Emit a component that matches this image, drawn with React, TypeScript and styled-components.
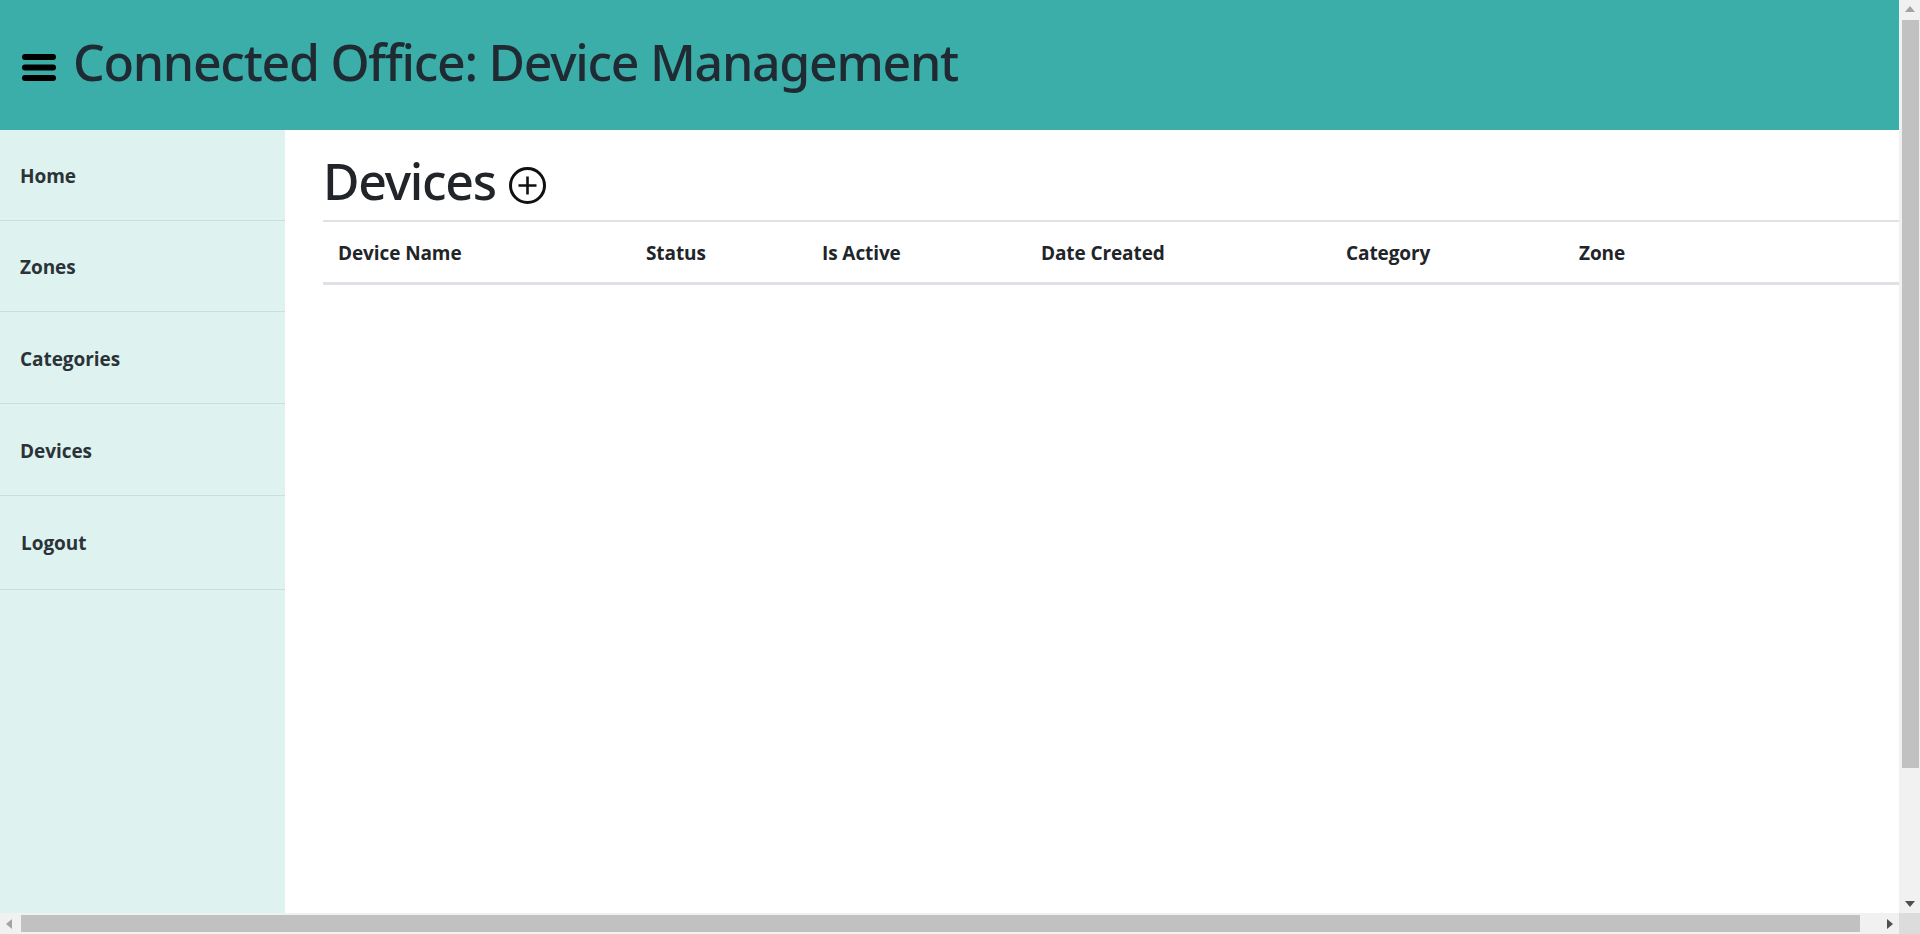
import React from "react";
import styled, { createGlobalStyle } from "styled-components";

const Global = createGlobalStyle`
  html, body { margin: 0; padding: 0; height: 100%; overflow: hidden; background: #fff; }
  * { box-sizing: border-box; }
`;

const Frame = styled.div`
  display: grid;
  grid-template-columns: 1899px 21px;
  grid-template-rows: 913px 21px;
  width: 1920px;
  height: 934px;
  font-family: "Open Sans", "Noto Sans", sans-serif;
  color: #212529;
`;
const Page = styled.div`
  display: flex;
  flex-direction: column;
  overflow: hidden;
  background: #fff;
`;
const Header = styled.header`
  display: flex;
  align-items: center;
  gap: 16px;
  height: 130px;
  padding: 0 0 6px 21px;
  background: #3caeaa;
`;
const MenuIcon = styled.svg`
  width: 36px;
  height: 27px;
  margin-top: 10px;
  flex: none;
`;
const Title = styled.h1`
  margin: 0;
  font-family: "Noto Sans", "Open Sans", sans-serif;
  font-size: 50px;
  font-weight: 500;
  line-height: 58px;
  letter-spacing: -1.27px;
  color: #1f2a33;
`;
const Body = styled.div`
  display: flex;
  flex: 1;
  min-height: 0;
`;
const Sidebar = styled.nav`
  display: flex;
  flex-direction: column;
  flex: 0 0 285px;
  background: #def3f0;
`;
const NavItem = styled.div<{ $h: number; $indent: number; $top: number }>`
  display: flex;
  align-items: center;
  height: ${(p) => p.$h}px;
  padding: ${(p) => p.$top}px 0 0 ${(p) => p.$indent}px;
  border-bottom: 1px solid #c9dfdc;
  font-size: 19px;
  font-weight: 700;
  letter-spacing: -0.05px;
  color: #2b3338;
`;
const Main = styled.main`
  flex: 1;
  padding: 0 0 0 38px;
`;
const Heading = styled.div`
  display: flex;
  align-items: center;
  gap: 13px;
  height: 90px;
  padding: 12px 0 0 0;
`;
const HeadingText = styled.h2`
  margin: 0;
  font-family: "Noto Sans", "Open Sans", sans-serif;
  font-size: 50px;
  font-weight: 500;
  line-height: 58px;
  letter-spacing: -1.27px;
  color: #212529;
`;
const AddButton = styled.svg`
  width: 37px;
  height: 37px;
  margin-top: 8px;
  color: #111;
`;
const Table = styled.table`
  width: 100%;
  border-collapse: collapse;
  table-layout: fixed;
`;
const Th = styled.th<{ $w: number }>`
  width: ${(p) => p.$w}px;
  height: 62px;
  padding: 2px 0 0 15px;
  text-align: left;
  font-size: 19px;
  font-weight: 700;
  letter-spacing: -0.1px;
  color: #212529;
  border-top: 2px solid #dee2e6;
  border-bottom: 3px solid #dee2e6;
`;
const VTrack = styled.div`
  display: flex;
  flex-direction: column;
  align-items: center;
  padding: 0 1px 0 2px;
  background: #f1f1f1;
`;
const HTrack = styled.div`
  display: flex;
  align-items: center;
  padding: 2px 0 2px 0;
  background: #f1f1f1;
`;
const Corner = styled.div`
  background: #dcdcdc;
`;
const ArrowBox = styled.svg`
  flex: 0 0 20px;
  width: 20px;
  height: 20px;
  display: block;
`;
const VThumb = styled.div`
  width: 17px;
  height: 748px;
  background: #c1c1c1;
`;
const VSpacer = styled.div`
  flex: 1;
`;
const HThumb = styled.div`
  width: 1839px;
  height: 17px;
  margin-left: 1px;
  background: #c1c1c1;
`;

const columns: [string, number][] = [
  ["Device Name", 308],
  ["Status", 176],
  ["Is Active", 219],
  ["Date Created", 305],
  ["Category", 233],
  ["Zone", 336],
];
const navItems: [string, number, number, number][] = [
  ["Home", 91, 20, 2],
  ["Zones", 91, 20, 2],
  ["Categories", 92, 20, 2],
  ["Devices", 92, 20, 2],
  ["Logout", 94, 21, 0],
];

export default function App() {
  return (
    <Frame>
      <Global />
      <Page>
        <Header>
          <MenuIcon viewBox="0 0 36 27" aria-hidden="true">
            <rect x="1" y="0" width="34" height="6" rx="3" fill="#000" />
            <rect x="1" y="10.5" width="34" height="6" rx="3" fill="#000" />
            <rect x="1" y="21" width="34" height="6" rx="3" fill="#000" />
          </MenuIcon>
          <Title>Connected Office: Device Management</Title>
        </Header>
        <Body>
          <Sidebar>
            {navItems.map(([label, h, indent, top]) => (
              <NavItem key={label} $h={h} $indent={indent} $top={top}>
                {label}
              </NavItem>
            ))}
          </Sidebar>
          <Main>
            <Heading>
              <HeadingText>Devices</HeadingText>
              <AddButton viewBox="0 0 37 37" aria-hidden="true">
                <circle cx="18.5" cy="18.5" r="17" fill="none" stroke="currentColor" strokeWidth="3" />
                <path d="M18.5 9.5v18M9.5 18.5h18" fill="none" stroke="currentColor" strokeWidth="2.6" />
              </AddButton>
            </Heading>
            <Table>
              <thead>
                <tr>
                  {columns.map(([label, w]) => (
                    <Th key={label} $w={w}>
                      {label}
                    </Th>
                  ))}
                </tr>
              </thead>
            </Table>
          </Main>
        </Body>
      </Page>
      <VTrack>
        <ArrowBox viewBox="0 0 20 20">
          <path d="M10 6l5 6H5z" fill="#a3a3a3" />
        </ArrowBox>
        <VThumb />
        <VSpacer />
        <ArrowBox viewBox="0 0 20 20">
          <path d="M10 14l5-6H5z" fill="#505050" />
        </ArrowBox>
      </VTrack>
      <HTrack>
        <ArrowBox viewBox="0 0 20 20">
          <path d="M6 10l6-5v10z" fill="#a3a3a3" />
        </ArrowBox>
        <HThumb />
        <VSpacer />
        <ArrowBox viewBox="0 0 20 20">
          <path d="M14 10L8 5v10z" fill="#505050" />
        </ArrowBox>
      </HTrack>
      <Corner />
    </Frame>
  );
}
